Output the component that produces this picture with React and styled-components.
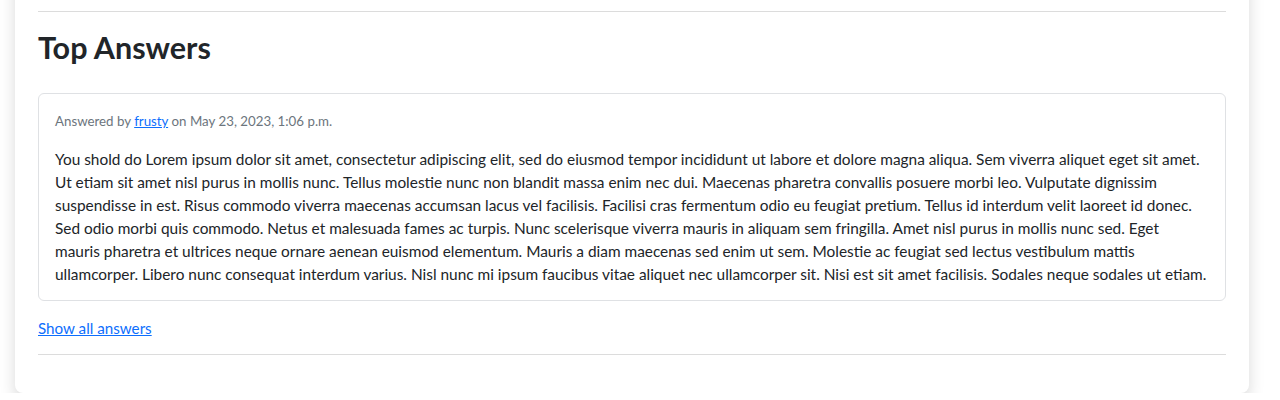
import React from 'react';
import styled, { createGlobalStyle } from 'styled-components';

const GlobalStyle = createGlobalStyle`
  html, body {
    margin: 0;
    padding: 0;
    background: #fff;
  }
  body {
    font-family: Lato, "Liberation Sans", sans-serif;
    color: #212529;
    overflow: hidden;
  }
`;

const Page = styled.div`
  padding: 0 31px 0 15px;
`;

const Panel = styled.section`
  margin-top: -40px;
  padding: 40px 23px 38px;
  background: #fff;
  border-radius: 8px;
  box-shadow: 0 0.5rem 1rem rgba(0, 0, 0, 0.15);
`;

const Rule = styled.hr`
  margin: ${(p) => p.$margin || '16px 0'};
  border: 0;
  border-top: 1px solid #dcdcdc;
`;

const Title = styled.h2`
  margin: 0 0 27px;
  font-size: 30.5px;
  font-weight: 700;
  line-height: 38px;
  color: #212529;
`;

const AnswerCard = styled.div`
  border: 1px solid #dfe1e4;
  border-radius: 6px;
  padding: 17px 18px 14px 16px;
`;

const Meta = styled.p`
  margin: 0 0 16px;
  font-size: 13.3px;
  line-height: 21px;
  color: #6c757d;

  a {
    color: #0d6efd;
  }
`;

const Body = styled.p`
  margin: 0;
  font-size: 15.4px;
  line-height: 23px;
`;

const ShowAll = styled.a`
  display: inline-block;
  margin-top: 15px;
  font-size: 15.2px;
  line-height: 24px;
  color: #0d6efd;
  text-decoration: underline;
`;

const answer = {
  author: 'frusty',
  date: 'May 23, 2023, 1:06 p.m.',
  text:
    'You shold do Lorem ipsum dolor sit amet, consectetur adipiscing elit, sed do eiusmod tempor incididunt ut labore et dolore magna aliqua. Sem viverra aliquet eget sit amet. Ut etiam sit amet nisl purus in mollis nunc. Tellus molestie nunc non blandit massa enim nec dui. Maecenas pharetra convallis posuere morbi leo. Vulputate dignissim suspendisse in est. Risus commodo viverra maecenas accumsan lacus vel facilisis. Facilisi cras fermentum odio eu feugiat pretium. Tellus id interdum velit laoreet id donec. Sed odio morbi quis commodo. Netus et malesuada fames ac turpis. Nunc scelerisque viverra mauris in aliquam sem fringilla. Amet nisl purus in mollis nunc sed. Eget mauris pharetra et ultrices neque ornare aenean euismod elementum. Mauris a diam maecenas sed enim ut sem. Molestie ac feugiat sed lectus vestibulum mattis ullamcorper. Libero nunc consequat interdum varius. Nisl nunc mi ipsum faucibus vitae aliquet nec ullamcorper sit. Nisi est sit amet facilisis. Sodales neque sodales ut etiam.'
};

export default function App() {
  return (
    <>
      <GlobalStyle />
      <Page>
        <Panel>
          <Rule $margin="11px 0 16px" />
          <Title>Top Answers</Title>
          <AnswerCard>
            <Meta>
              Answered by <a href="#">{answer.author}</a> on {answer.date}
            </Meta>
            <Body>{answer.text}</Body>
          </AnswerCard>
          <ShowAll href="#">Show all answers</ShowAll>
          <Rule $margin="14px 0 0" />
        </Panel>
      </Page>
    </>
  );
}
